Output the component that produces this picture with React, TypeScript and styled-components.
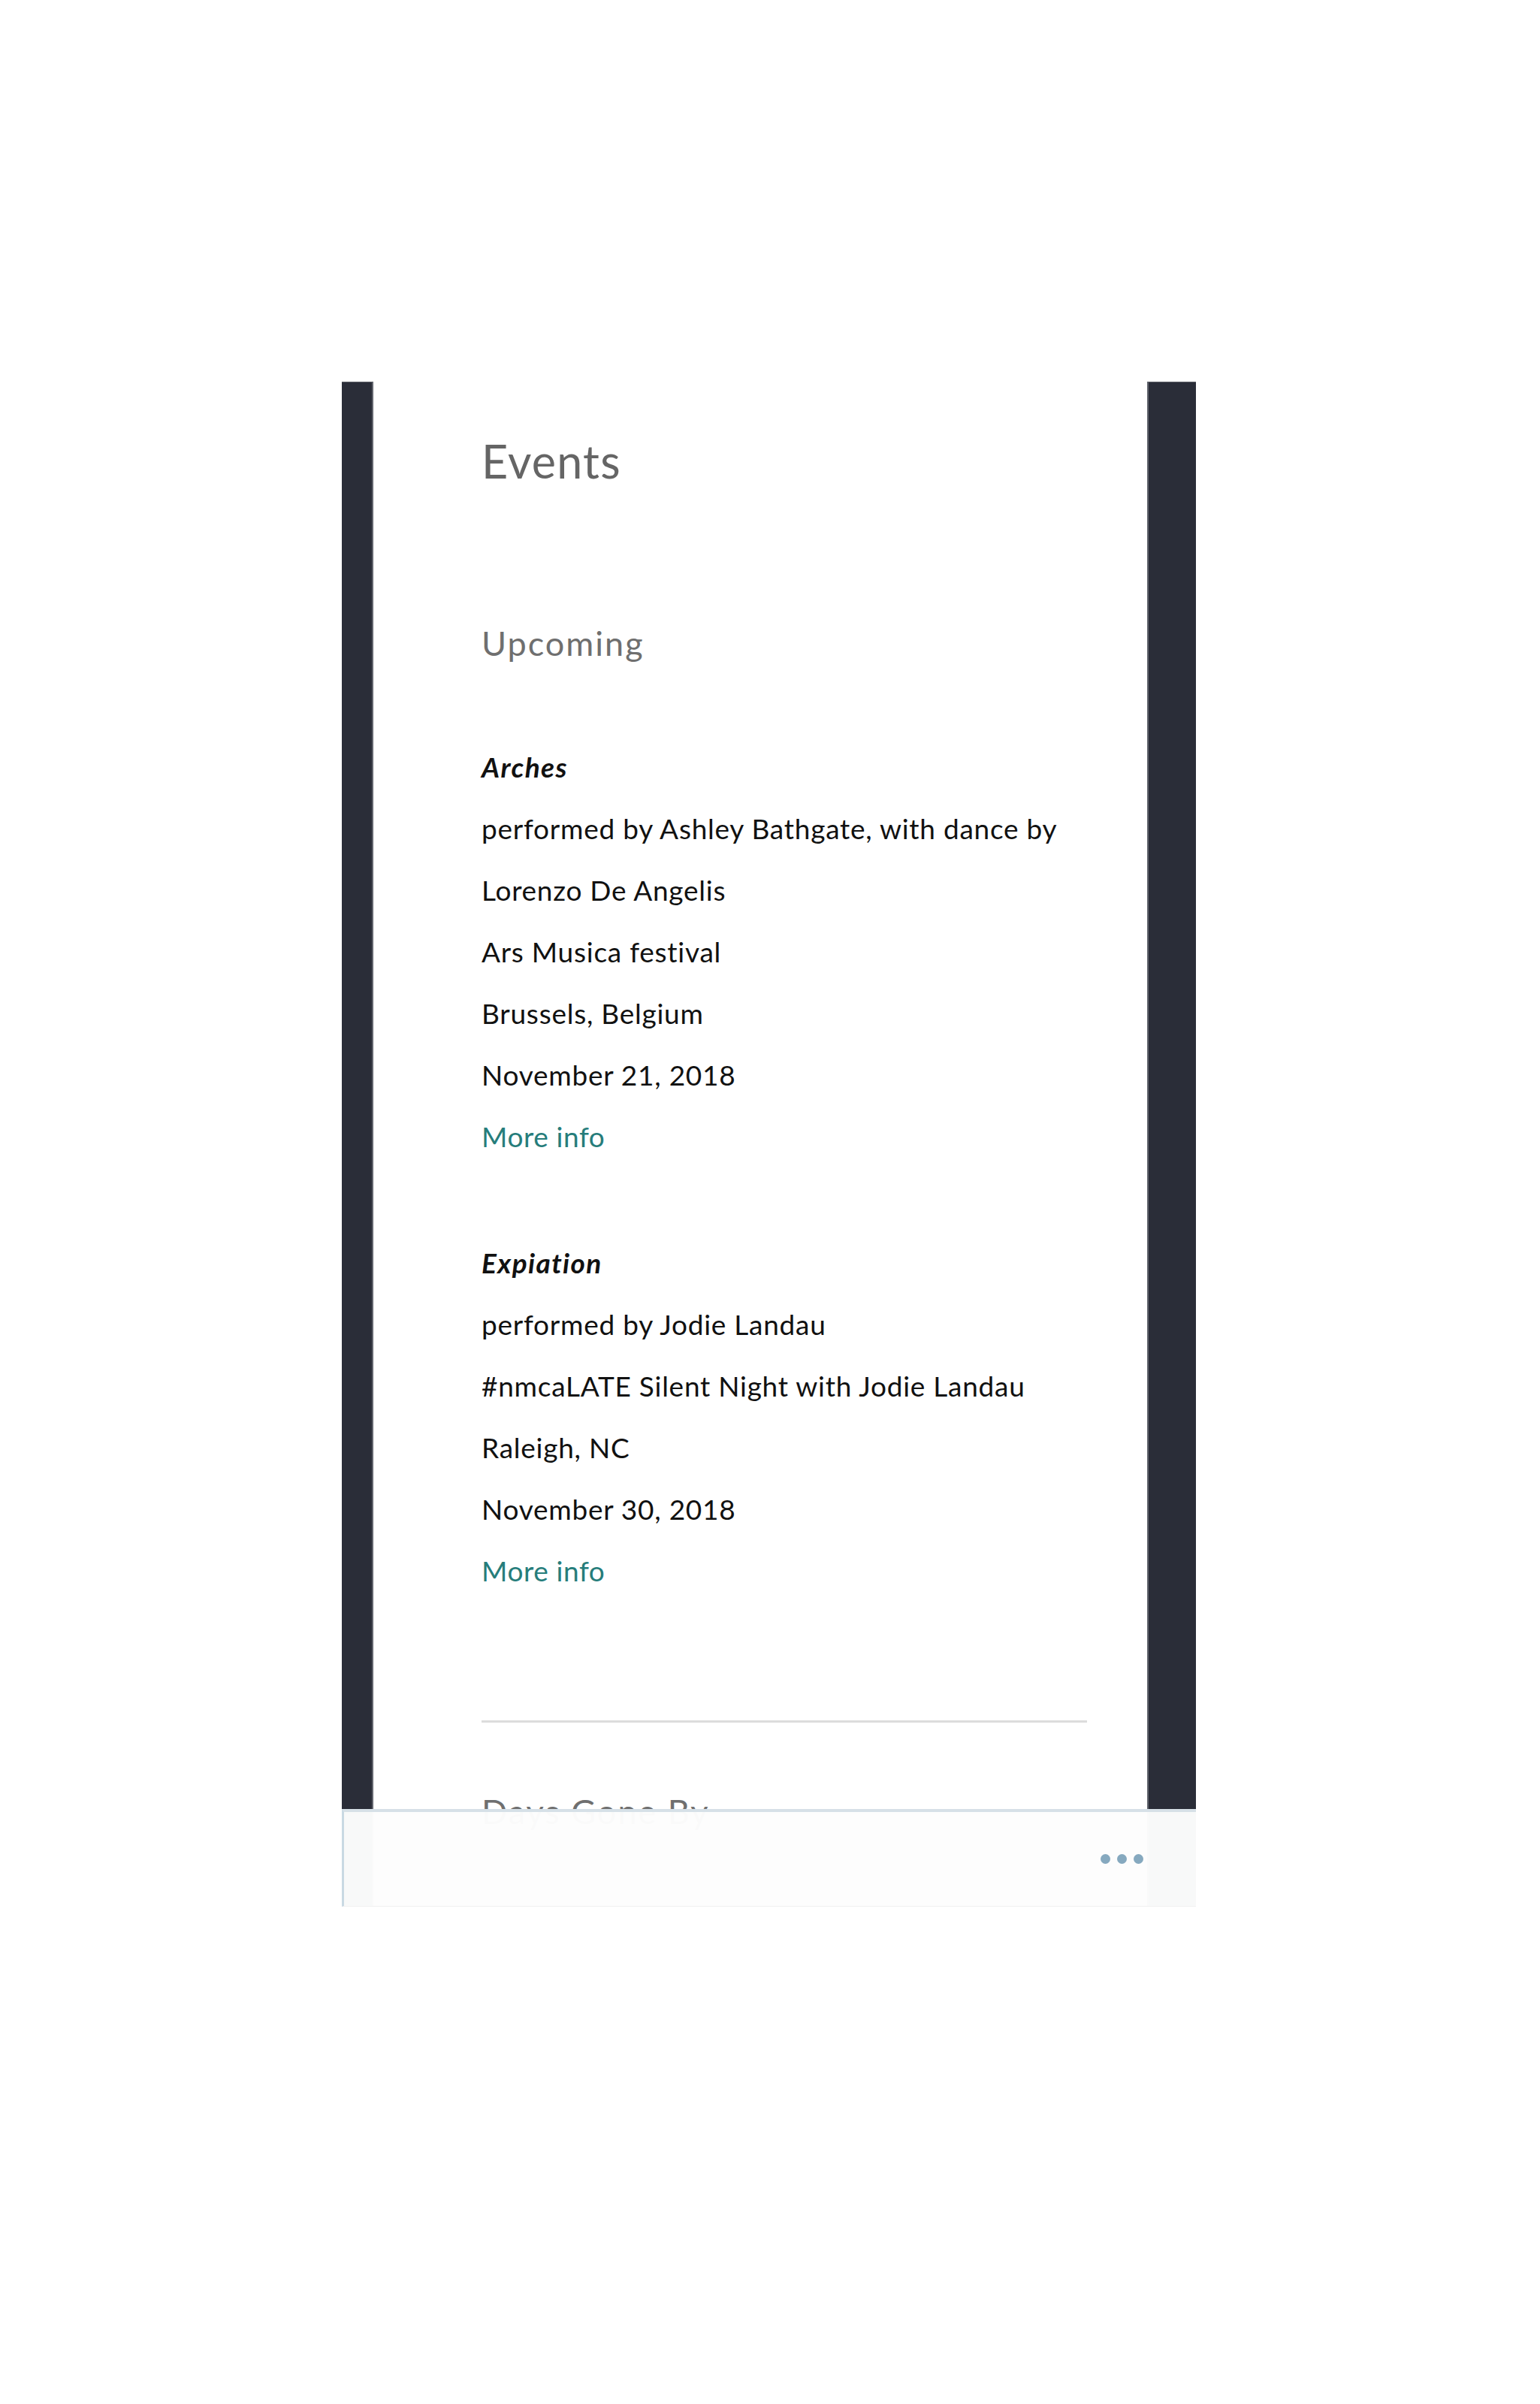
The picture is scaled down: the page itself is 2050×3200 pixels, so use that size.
import styled, { createGlobalStyle } from 'styled-components';

const GlobalStyle = createGlobalStyle`
  body {
    margin: 0;
    background: #ffffff;
    font-family: Lato, 'Open Sans', sans-serif;
  }
`;

type EventItem = {
  title: string;
  lines: string[];
};

const upcoming: EventItem[] = [
  {
    title: 'Arches',
    lines: [
      'performed by Ashley Bathgate, with dance by',
      'Lorenzo De Angelis',
      'Ars Musica festival',
      'Brussels, Belgium',
      'November 21, 2018',
    ],
  },
  {
    title: 'Expiation',
    lines: [
      'performed by Jodie Landau',
      '#nmcaLATE Silent Night with Jodie Landau',
      'Raleigh, NC',
      'November 30, 2018',
    ],
  },
];

const App = () => (
  <Page>
    <GlobalStyle />
    <Phone>
      <Screen>
        <SideBar width={42} edge='right' />
        <Content>
          <Title>Events</Title>
          <SubTitle marginTop={181}>Upcoming</SubTitle>
          <EventList>
            {upcoming.map((item) => (
              <EventBlock key={item.title}>
                <EventName>{item.title}</EventName>
                {item.lines.map((line) => (
                  <Line key={line}>{line}</Line>
                ))}
                <MoreInfo href='#'>More info</MoreInfo>
              </EventBlock>
            ))}
          </EventList>
          <Divider />
          <SubTitle marginTop={93}>Days Gone By</SubTitle>
        </Content>
        <SideBar width={65} edge='left' />
      </Screen>
      <Toolbar>
        <Dot />
        <Dot />
        <Dot />
      </Toolbar>
    </Phone>
  </Page>
);

export default App;

const Page = styled.div`
  padding: 508px 0 662px 455px;
`;

const Phone = styled.div`
  position: relative;
  width: 1137px;
  height: 2030px;
  overflow: hidden;
`;

const Screen = styled.div`
  display: flex;
  height: 100%;
`;

const SideBar = styled.div<{ width: number; edge: 'left' | 'right' }>`
  flex: 0 0 ${({ width }) => width}px;
  background: #2a2d38;
  box-sizing: border-box;
  border-top: 1px solid #5f626a;
  border-${({ edge }) => edge}: 2px solid #62656d;
`;

const Content = styled.main`
  flex: 1;
  background: #ffffff;
  padding: 70px 80px 0 144px;
  overflow: hidden;
`;

const Title = styled.h1`
  margin: 0;
  font-size: 61px;
  line-height: 72px;
  letter-spacing: 1.2px;
  font-weight: 400;
  color: #656565;
`;

const SubTitle = styled.h2<{ marginTop: number }>`
  margin: ${({ marginTop }) => marginTop}px 0 0;
  font-size: 45px;
  line-height: 51.6px;
  letter-spacing: 2px;
  font-weight: 400;
  color: #6f6f6f;
`;

const EventList = styled.div`
  display: flex;
  flex-direction: column;
  gap: 86px;
  margin-top: 97px;
`;

const EventBlock = styled.article`
  display: flex;
  flex-direction: column;
  align-items: flex-start;
`;

const Line = styled.p`
  margin: 0;
  font-size: 37px;
  line-height: 82px;
  letter-spacing: 0.75px;
  color: #111111;
  white-space: nowrap;
`;

const EventName = styled(Line)`
  font-weight: 700;
  font-style: italic;
  letter-spacing: 1.4px;
`;

const MoreInfo = styled.a`
  font-size: 37px;
  line-height: 82px;
  letter-spacing: 0.6px;
  color: #267d7b;
  text-decoration: none;
`;

const Divider = styled.hr`
  margin: 158px 0 0;
  border: 0;
  height: 3px;
  background: #dcdcdc;
`;

const Toolbar = styled.div`
  position: absolute;
  left: 0;
  right: 0;
  bottom: 0;
  height: 130px;
  box-sizing: border-box;
  display: flex;
  align-items: center;
  justify-content: flex-end;
  gap: 9px;
  padding-right: 70px;
  background: rgba(253, 253, 253, 0.98);
  border-top: 4px solid #d6e0e7;
  border-left: 3px solid #c9d9e3;
  border-bottom: 1px solid #f0f0f0;
`;

const Dot = styled.span`
  width: 13px;
  height: 13px;
  border-radius: 50%;
  background: #86a9bf;
`;
